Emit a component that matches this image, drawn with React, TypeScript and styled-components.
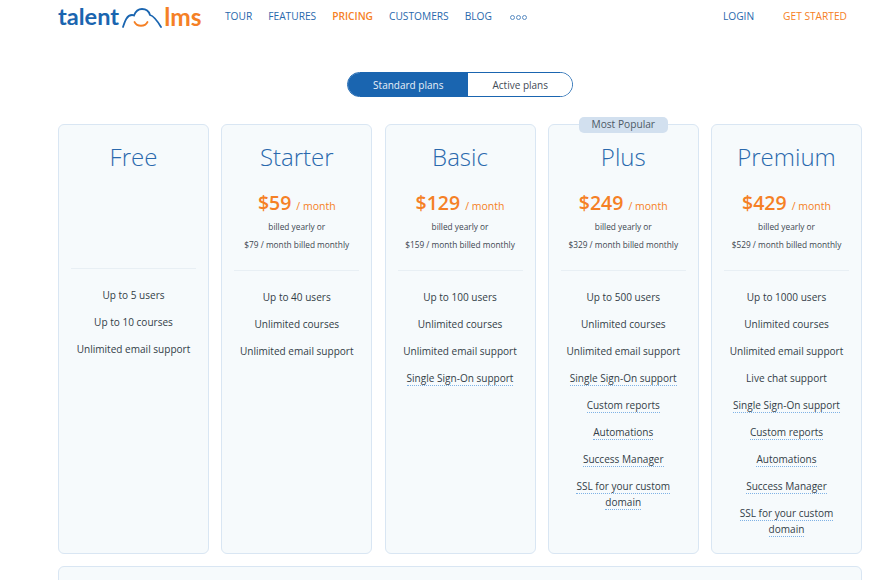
import styled, { createGlobalStyle } from "styled-components";

type Plan = {
  name: string;
  price?: string;
  monthly?: string;
  popular?: boolean;
  features: { label: string; dotted?: boolean }[];
};

const base = [
  { label: "Unlimited courses" },
  { label: "Unlimited email support" },
];

const extras = [
  { label: "Custom reports", dotted: true },
  { label: "Automations", dotted: true },
  { label: "Success Manager", dotted: true },
];

const ssl = { label: "SSL for your custom domain", dotted: true };
const sso = { label: "Single Sign-On support", dotted: true };

const plans: Plan[] = [
  {
    name: "Free",
    features: [
      { label: "Up to 5 users" },
      { label: "Up to 10 courses" },
      { label: "Unlimited email support" },
    ],
  },
  {
    name: "Starter",
    price: "$59",
    monthly: "$79",
    features: [{ label: "Up to 40 users" }, ...base],
  },
  {
    name: "Basic",
    price: "$129",
    monthly: "$159",
    features: [{ label: "Up to 100 users" }, ...base, sso],
  },
  {
    name: "Plus",
    price: "$249",
    monthly: "$329",
    popular: true,
    features: [{ label: "Up to 500 users" }, ...base, sso, ...extras, ssl],
  },
  {
    name: "Premium",
    price: "$429",
    monthly: "$529",
    features: [
      { label: "Up to 1000 users" },
      ...base,
      { label: "Live chat support" },
      sso,
      ...extras,
      ssl,
    ],
  },
];

export default function App() {
  return (
    <>
      <GlobalStyle />
      <Page>
        <Header>
          <Logo>
            <LogoTalent>talent</LogoTalent>
            <CloudIcon />
            <LogoLms>lms</LogoLms>
          </Logo>
          <Nav>
            <NavLink>TOUR</NavLink>
            <NavLink>FEATURES</NavLink>
            <NavLink $active>PRICING</NavLink>
            <NavLink>CUSTOMERS</NavLink>
            <NavLink>BLOG</NavLink>
            <MoreDots>
              <i />
              <i />
              <i />
            </MoreDots>
          </Nav>
          <HeaderRight>
            <NavLink>LOGIN</NavLink>
            <NavLink $active $light>
              GET STARTED
            </NavLink>
          </HeaderRight>
        </Header>

        <Toggle>
          <ToggleOption $selected>Standard plans</ToggleOption>
          <ToggleOption>Active plans</ToggleOption>
        </Toggle>

        <Cards>
          {plans.map((plan) => (
            <Card key={plan.name}>
              {plan.popular && <Badge>Most Popular</Badge>}
              <PlanName>{plan.name}</PlanName>
              <PriceBlock $free={!plan.price}>
                {plan.price && (
                  <>
                    <PriceRow>
                      <Price>{plan.price}</Price>
                      <Period>/ month</Period>
                    </PriceRow>
                    <Billing>billed yearly or</Billing>
                    <Billing>{plan.monthly} / month billed monthly</Billing>
                  </>
                )}
              </PriceBlock>
              <Divider />
              <Features>
                {plan.features.map((f) => (
                  <Feature key={f.label}>
                    <FeatureText $dotted={f.dotted}>{f.label}</FeatureText>
                  </Feature>
                ))}
              </Features>
            </Card>
          ))}
        </Cards>

        <BottomPanel />
      </Page>
    </>
  );
}

function CloudIcon() {
  return (
    <CloudSvg viewBox="0 0 40 20" fill="none">
      <path
        d="M1 19 C3 13 5 7 10 7 C11 7 11.5 7.2 12 7.5 C13.5 3.5 16.5 1 20 1 C24 1 27 3.5 28 7 C32 8 36 14 39 19"
        stroke="#1a65b0"
        strokeWidth="1.8"
        strokeLinecap="round"
      />
      <path
        d="M12.5 14 C15 19 23 19 25.5 14"
        stroke="#f58025"
        strokeWidth="1.8"
        strokeLinecap="round"
      />
    </CloudSvg>
  );
}

const GlobalStyle = createGlobalStyle`
  html, body {
    margin: 0;
    padding: 0;
    background: #fff;
    overflow: hidden;
  }
  body {
    font-family: "Open Sans", "Liberation Sans", sans-serif;
  }
`;

const Page = styled.div`
  width: 878px;
  height: 580px;
  box-sizing: border-box;
  padding: 0 16px 0 58px;
  overflow: hidden;
`;

const Header = styled.header`
  display: flex;
  align-items: center;
  height: 32px;
`;

const Logo = styled.div`
  display: flex;
  align-items: flex-end;
  width: 167px;
  height: 25px;
  font-family: "Lato", "Open Sans", sans-serif;
  font-size: 23.6px;
  font-weight: 700;
  line-height: 25px;
`;

const LogoTalent = styled.span`
  color: #1a65b0;
`;

const LogoLms = styled.span`
  color: #f58025;
  font-size: 24.5px;
`;

const CloudSvg = styled.svg`
  width: 40px;
  height: 20px;
  margin: 0 2px 1px 3px;
  flex: none;
`;

const Nav = styled.nav`
  display: flex;
  align-items: center;
  gap: 16px;
`;

const NavLink = styled.a<{ $active?: boolean; $light?: boolean }>`
  font-size: 10.2px;
  line-height: 14px;
  white-space: nowrap;
  color: ${(p) => (p.$active ? "#f58025" : "#2a69ad")};
  font-weight: ${(p) => (p.$active && !p.$light ? 600 : 400)};
`;

const MoreDots = styled.span`
  display: flex;
  gap: 1px;
  margin: 2px 0 0 2px;

  i {
    width: 3px;
    height: 3px;
    border: 1px solid #5a8cc2;
    border-radius: 50%;
  }
`;

const HeaderRight = styled.div`
  display: flex;
  gap: 29px;
  margin-left: auto;
  margin-right: 15px;
`;

const Toggle = styled.div`
  display: flex;
  width: 226px;
  height: 25px;
  box-sizing: border-box;
  margin: 40px 0 0 289px;
  border: 1px solid #1a65b0;
  border-radius: 13px;
  overflow: hidden;
`;

const ToggleOption = styled.div<{ $selected?: boolean }>`
  display: flex;
  align-items: center;
  justify-content: center;
  width: ${(p) => (p.$selected ? "121px" : "104px")};
  font-size: 10px;
  color: ${(p) => (p.$selected ? "#e8f0f8" : "#3f4a55")};
  background: ${(p) => (p.$selected ? "#1a65b0" : "#fff")};
`;

const Cards = styled.div`
  display: grid;
  grid-template-columns: repeat(5, 151px);
  column-gap: 12.25px;
  margin-top: 27px;
`;

const Card = styled.section`
  position: relative;
  height: 430px;
  box-sizing: border-box;
  padding: 0 12px;
  text-align: center;
  background: #f6fafc;
  border: 1px solid #d9e6f3;
  border-radius: 6px;
`;

const Badge = styled.div`
  position: absolute;
  top: -8px;
  left: 30px;
  width: 89px;
  height: 16px;
  font-size: 10.2px;
  line-height: 15px;
  color: #4d5a66;
  background: #d2e0ef;
  border-radius: 5px;
`;

const PlanName = styled.h2`
  margin: 15px 0 0;
  font-size: 24px;
  font-weight: 300;
  line-height: 34px;
  color: #2a69ad;
`;

const PriceBlock = styled.div<{ $free?: boolean }>`
  height: ${(p) => (p.$free ? "94px" : "96px")};
  box-sizing: border-box;
  padding-top: 14px;
`;

const PriceRow = styled.div`
  display: flex;
  align-items: baseline;
  justify-content: center;
  gap: 5px;
  height: 30px;
  line-height: 30px;
  color: #f58025;
`;

const Price = styled.span`
  font-size: 19.5px;
  font-weight: 600;
`;

const Period = styled.span`
  font-size: 10.5px;
`;

const Billing = styled.div`
  font-size: 8.3px;
  line-height: 18px;
  color: #3c4650;
`;

const Divider = styled.hr`
  margin: 0;
  border: 0;
  border-top: 1px solid #e8eff4;
`;

const Features = styled.ul`
  display: flex;
  flex-direction: column;
  gap: 11.5px;
  margin: 0;
  padding: 19px 0 0;
  list-style: none;
`;

const Feature = styled.li`
  font-size: 10.05px;
  line-height: 15.5px;
  color: #333d47;
`;

const FeatureText = styled.span<{ $dotted?: boolean }>`
  ${(p) => (p.$dotted ? "border-bottom: 1px dotted #7fb2e5;" : "")}
`;

const BottomPanel = styled.div`
  height: 40px;
  margin-top: 12px;
  background: #f6fafc;
  border: 1px solid #d9e6f3;
  border-radius: 6px;
  box-sizing: border-box;
`;
